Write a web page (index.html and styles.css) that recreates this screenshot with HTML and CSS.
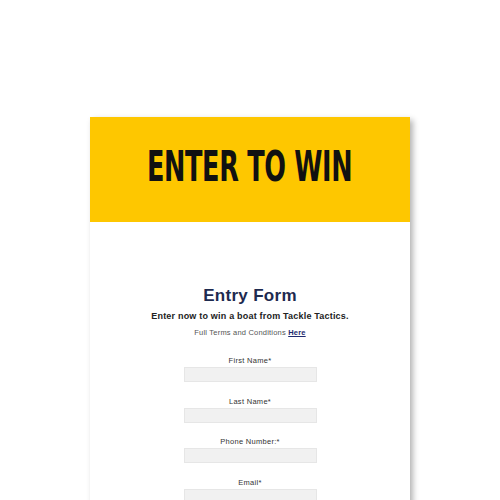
FILE: index.html
```html
<!DOCTYPE html>
<html>
<head>
<meta charset="utf-8">
<link rel="stylesheet" href="styles.css">
</head>
<body>
<div class="card">
  <div class="hero"><h1 class="hero-title">ENTER TO WIN</h1></div>
  <div class="form">
    <h2 class="form-title">Entry Form</h2>
    <p class="lead">Enter now to win a boat from Tackle Tactics.</p>
    <p class="terms">Full Terms and Conditions <a href="#">Here</a></p>
    <div class="field"><label>First Name*</label><div class="input"></div></div>
    <div class="field"><label>Last Name*</label><div class="input"></div></div>
    <div class="field"><label>Phone Number:*</label><div class="input"></div></div>
    <div class="field"><label>Email*</label><div class="input"></div></div>
  </div>
</div>
</body>
</html>
```
FILE: styles.css
```css
html, body { margin: 0; padding: 0; background: #fff; }
body { font-family: "Liberation Sans", Arial, sans-serif; overflow: hidden; height: 500px; }
.card {
  width: 320px;
  margin: 117px 0 0 90px;
  background: #fff;
  box-shadow: 3px 3px 6px rgba(0,0,0,0.3);
  height: 400px;
}
.hero {
  background: #fec700;
  height: 105px;
  display: flex;
  align-items: center;
  justify-content: center;
  padding-bottom: 8px;
  box-sizing: border-box;
}
.hero-title {
  margin: 0;
  font-family: "DejaVu Sans Condensed", "DejaVu Sans", sans-serif;
  font-stretch: condensed;
  font-weight: bold;
  font-size: 43px;
  color: #111;
  letter-spacing: -0.5px;
  transform: scaleX(0.66);
}
.form {
  display: flex;
  flex-direction: column;
  align-items: center;
  padding-top: 64px;
}
.form-title {
  margin: 0;
  font-size: 17px;
  font-weight: bold;
  color: #1e2a4f;
  letter-spacing: 0.3px;
  line-height: 20px;
}
.lead {
  margin: 4px 0 0;
  font-size: 9px;
  font-weight: bold;
  color: #222;
  letter-spacing: 0.2px;
  line-height: 12px;
}
.terms {
  margin: 6px 0 0;
  font-size: 7.5px;
  color: #555;
  letter-spacing: 0.2px;
  line-height: 10px;
}
.terms a { color: #1e2a6f; font-weight: bold; }
.field {
  display: flex;
  flex-direction: column;
  align-items: center;
  margin-top: 18px;
}
.field + .field { margin-top: 14.5px; }
.field label {
  font-size: 7.5px;
  color: #333;
  letter-spacing: 0.3px;
  line-height: 10px;
}
.input {
  margin-top: 1px;
  width: 133px;
  height: 15px;
  background: #f1f1f1;
  border: 1px solid #e6e6e6;
  box-sizing: border-box;
}
```
